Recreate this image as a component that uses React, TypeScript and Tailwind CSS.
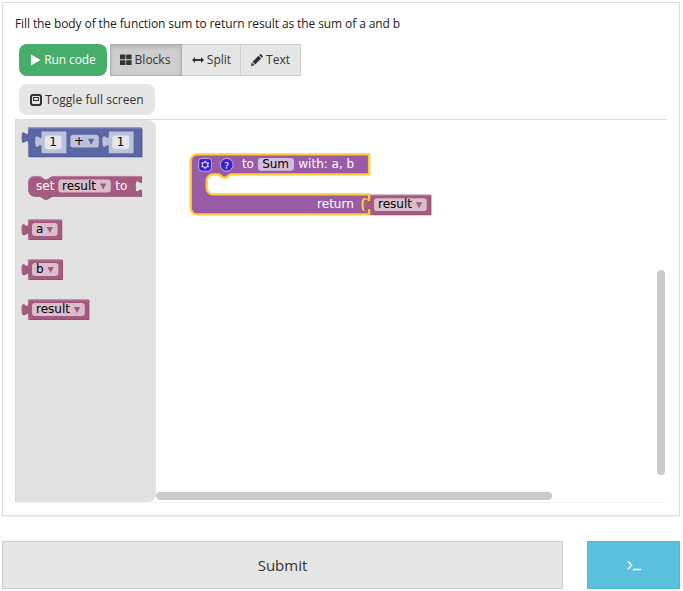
import React from "react";

const TAB_DOWN = "v5c0,10 -8,-8 -8,7.5s8,-2.5 8,7.5";

function Label({ x, y, dark = false, children }: { x: number; y: number; dark?: boolean; children: string }) {
  return (
    <text x={x} y={y} fontSize="15" fill={dark ? "#000" : "#fff"}>
      {children}
    </text>
  );
}

function Field({ x, y, w }: { x: number; y: number; w: number }) {
  return <rect x={x} y={y} width={w} height="16" rx="4" fill="#fff" fillOpacity="0.6" />;
}

function Arrow({ x, y, color }: { x: number; y: number; color: string }) {
  return <path d={`M${x},${y}h8l-4,7.5z`} fill={color} />;
}

function ValueBlock({ x, y, w, name }: { x: number; y: number; w: number; name: string }) {
  const body = `M0,0H${w}V25H0V20c0,-10 -8,8 -8,-7.5s8,2.5 8,-7.5z`;
  return (
    <g transform={`translate(${x},${y}) scale(0.8)`}>
      <path d={body} transform="translate(0.7,0.7)" fill="#84496a" />
      <path d={body} fill="#a55b80" />
      <path d={`M0.5,24.5V20M0.5,5V0.5H${w - 0.5}M-7,9c-1,2 -1,5 0,7`} fill="none" stroke="#c08ca6" strokeWidth="1" />
      <Field x={5} y={4.5} w={w - 10} />
      <Label x={10} y={17} dark>{name}</Label>
      <Arrow x={w - 18.7} y={9.5} color="#a55b80" />
    </g>
  );
}

function MathBlock() {
  const hole = (x: number) => `M${x},5h31v27h-31V25c0,-10 -8,8 -8,-7.5s8,2.5 8,-7.5z`;
  return (
    <g transform="translate(28,127.6) scale(0.8)">
      <path d="M1,1H143V37H1z" fill="#49528a" />
      <path d="M0,0H142V36H0V20c0,-10 -8,8 -8,-7.5s8,2.5 8,-7.5z" fill="#5b67a5" />
      <path d="M0.5,35.5V20M0.5,5V0.5H141.5" fill="none" stroke="#8c95c0" />
      <path d={hole(17)} fill="#bdc2db" />
      <path d={hole(101)} fill="#bdc2db" />
      <rect x="21" y="10" width="21" height="17" rx="4" fill="#e5e7f1" />
      <rect x="105.5" y="10" width="21" height="17" rx="4" fill="#e5e7f1" />
      <Label x={26.5} y={23} dark>1</Label>
      <Label x={111} y={23} dark>1</Label>
      <Field x={53} y={9} w={35.5} />
      <Label x={57.5} y={22} dark>+</Label>
      <Arrow x={75} y={14} color="#5b67a5" />
    </g>
  );
}

function SetBlock() {
  const d = `M0,8A8,8 0 0,1 8,0H15l6,4 3,0 6,-4H142${TAB_DOWN}V25H29.5l-6,4 -3,0 -6,-4H8a8,8 0 0,1 -8,-8z`;
  return (
    <g transform="translate(28,176) scale(0.8)">
      <path d={d} transform="translate(0.6,0.8)" fill="#84496a" />
      <path d={d} fill="#a55b80" />
      <path d="M0.5,17V8A7.5,7.5 0 0,1 8,0.5H15l6,4 3,0 6,-4H142" fill="none" stroke="#c08ca6" />
      <Label x={10} y={17}>set</Label>
      <Field x={38} y={4.5} w={65.5} />
      <Label x={42.5} y={17} dark>result</Label>
      <Arrow x={90} y={9.5} color="#a55b80" />
      <Label x={109} y={17}>to</Label>
    </g>
  );
}

function FunctionBlock() {
  return (
    <g transform="translate(190.7,154.4) scale(0.8)">
      <path
        d={`M0,8A8,8 0 0,1 8,0H223V25H50l-6,4 -3,0 -6,-4h-7a8,8 0 0,0 -8,8v9a8,8 0 0,0 8,8H223${TAB_DOWN}V75H8a8,8 0 0,1 -8,-8z`}
        fill="#995ba5"
        stroke="#fc3"
        strokeWidth="3"
      />
      <g opacity="0.65" transform="translate(10,5)">
        <g>
          <rect width="16" height="16" rx="4" fill="#00f" stroke="#fff" />
          <path
            fill="#fff"
            d="m4.203,7.296 0,1.368 -0.92,0.677 -0.11,0.41 0.9,1.559 0.41,0.11 1.043,-0.457 1.187,0.683 0.127,1.134 0.3,0.3 1.8,0 0.3,-0.299 0.127,-1.138 1.185,-0.682 1.046,0.458 0.409,-0.11 0.9,-1.559 -0.11,-0.41 -0.92,-0.677 0,-1.366 0.92,-0.677 0.11,-0.41 -0.9,-1.559 -0.409,-0.109 -1.046,0.458 -1.185,-0.682 -0.127,-1.138 -0.3,-0.299 -1.8,0 -0.3,0.3 -0.126,1.135 -1.187,0.682 -1.043,-0.457 -0.41,0.11 -0.899,1.559 0.108,0.409z"
          />
          <circle cx="8" cy="8" r="2.7" fill="#00f" />
        </g>
        <g transform="translate(27,0)">
          <circle cx="8" cy="8" r="8" fill="#00f" stroke="#fff" />
          <path
            fill="#fff"
            d="m6.8,10h2c0.003,-0.617 0.271,-0.962 0.633,-1.266 2.875,-2.405 0.607,-5.534 -3.765,-3.874v1.7c3.12,-1.657 3.698,0.118 2.336,1.25 -1.201,0.998 -1.201,1.528 -1.204,2.19z"
          />
          <rect x="6.8" y="10.78" width="2" height="2" fill="#fff" />
        </g>
      </g>
      <Label x={64} y={17}>to</Label>
      <Field x={84} y={4.5} w={45} />
      <Label x={89.3} y={17} dark>Sum</Label>
      <Label x={134.5} y={17}>with: a, b</Label>
      <Label x={158} y={67}>return</Label>
    </g>
  );
}

function RunIcon() {
  return (
    <svg className="h-3 w-3" viewBox="0 0 12 12" fill="currentColor">
      <path d="M2 .6v10.8L11.6 6z" />
    </svg>
  );
}

function BlocksIcon() {
  return (
    <svg className="h-3 w-3" viewBox="0 0 12 12" fill="currentColor">
      <rect x="0" y="0.5" width="5.4" height="4.8" rx=".5" />
      <rect x="6.2" y="0.5" width="5.4" height="4.8" rx=".5" />
      <rect x="0" y="6.2" width="5.4" height="4.8" rx=".5" />
      <rect x="6.2" y="6.2" width="5.4" height="4.8" rx=".5" />
    </svg>
  );
}

function SplitIcon() {
  return (
    <svg className="h-3 w-3" viewBox="0 0 12 12" fill="currentColor">
      <path d="M0 6l3-3v2h6V3l3 3-3 3V7H3v2z" />
    </svg>
  );
}

function PencilIcon() {
  return (
    <svg className="h-3 w-3" viewBox="0 0 12 12" fill="currentColor">
      <path d="M0 12l.8-3.5 2.7 2.7zM1.5 7.8l6-6 2.7 2.7-6 6zM8.2 1.1L9 .3q.5-.5 1 0l1.7 1.7q.5.5 0 1l-.8.8z" />
    </svg>
  );
}

function ScreenIcon() {
  return (
    <svg className="h-3 w-3" viewBox="0 0 12 12" fill="none" stroke="currentColor">
      <rect x="1" y="1" width="10" height="10" rx="2" strokeWidth="2" />
      <rect x="3.5" y="3.5" width="5" height="3" strokeWidth="1" />
    </svg>
  );
}

export default function App() {
  return (
    <div className="h-[591px] w-[683px] overflow-hidden bg-white pl-[2px] pt-[2px] font-['Open_Sans','Noto_Sans',sans-serif] text-[12px] text-[#333]">
      <section className="flex h-[514px] w-[678px] flex-col border border-[#ddd] px-3 shadow-[0_1px_1px_rgba(0,0,0,0.05)]">
        <p className="mt-3 h-[18px] whitespace-nowrap leading-[18px] tracking-[-0.1px] text-[#222]">
          Fill the body of the function sum to return result as the sum of a and b
        </p>
        <div className="ml-1 mt-[11px] flex h-8">
          <button className="flex w-[88px] items-center justify-center gap-[3px] rounded-lg bg-[#46ad6b] pr-px tracking-[-0.1px] text-white">
            <RunIcon />
            Run code
          </button>
          <div className="ml-[3px] flex">
            <button className="flex w-[72px] items-center justify-center gap-[3px] border border-[#adadad] bg-[#cecece] pr-[2px] shadow-[inset_0_2px_4px_rgba(0,0,0,0.13)]">
              <BlocksIcon />
              Blocks
            </button>
            <button className="flex w-[59px] items-center justify-center gap-[3px] border-y border-r border-[#ccc] bg-[#e6e6e6] pl-px">
              <SplitIcon />
              Split
            </button>
            <button className="flex w-[60px] items-center justify-center gap-[3px] border-y border-r border-[#ccc] bg-[#e6e6e6]">
              <PencilIcon />
              Text
            </button>
          </div>
        </div>
        <button className="ml-1 mt-2 flex h-[31px] w-[136px] items-center justify-center gap-[3px] rounded-lg bg-[#e6e6e6] tracking-[0.05px]">
          <ScreenIcon />
          Toggle full screen
        </button>
        <div className="relative mt-1 flex h-[384px] w-[652px] border-b border-t border-b-[#f5f5f5] border-t-[#ddd]">
          <div className="w-[141px] rounded-r-lg border-l border-[#d6d6d6] bg-[#e2e2e2]" />
          <svg
            className="absolute left-0 top-[-1px] h-[384px] w-[652px] font-['DejaVu_Sans',sans-serif]"
            viewBox="15 119 652 384"
          >
            <MathBlock />
            <SetBlock />
            <ValueBlock x={28} y={219.5} w={42} name="a" />
            <ValueBlock x={28} y={259.5} w={43} name="b" />
            <ValueBlock x={28} y={299.5} w={76} name="result" />
            <FunctionBlock />
            <ValueBlock x={370} y={194.7} w={76} name="result" />
          </svg>
          <div className="absolute left-[141px] top-[372px] h-2 w-[395.5px] rounded-full bg-[#cbcbcb]" />
          <div className="absolute left-[641.5px] top-[149.5px] h-[205px] w-2 rounded-full bg-[#cbcbcb]" />
        </div>
      </section>
      <div className="mt-[25px] flex h-12 gap-6 text-[15px]">
        <button className="w-[561px] border border-[#ccc] bg-[#e6e6e6]">Submit</button>
        <button className="flex w-[93px] items-center justify-center border border-[#46b8da] bg-[#5bc0de] text-white">
          <svg className="h-3 w-[14px]" viewBox="0 0 14 12" fill="none" stroke="currentColor" strokeWidth="1.3">
            <path d="M.8 2.3L4.8 6.3.8 10.3M6 10.5h8" />
          </svg>
        </button>
      </div>
    </div>
  );
}
